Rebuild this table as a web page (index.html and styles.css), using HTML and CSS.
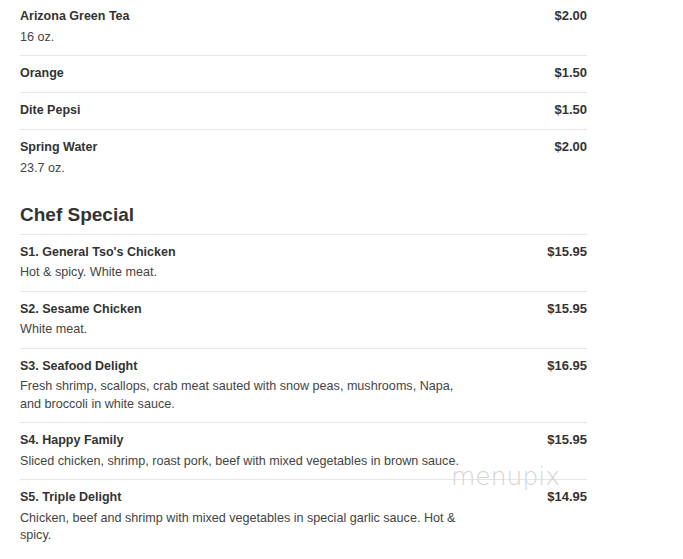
FILE: index.html
```html
<!DOCTYPE html>
<html>
<head>
<meta charset="utf-8">
<link rel="stylesheet" href="styles.css">
</head>
<body>
<div class="menu">
  <div class="section section-top">
    <div class="item first">
      <div class="row"><span class="name">Arizona Green Tea</span><span class="price">$2.00</span></div>
      <div class="desc">16 oz.</div>
    </div>
    <div class="item">
      <div class="row"><span class="name">Orange</span><span class="price">$1.50</span></div>
    </div>
    <div class="item">
      <div class="row"><span class="name">Dite Pepsi</span><span class="price">$1.50</span></div>
    </div>
    <div class="item last">
      <div class="row"><span class="name">Spring Water</span><span class="price">$2.00</span></div>
      <div class="desc">23.7 oz.</div>
    </div>
  </div>
  <div class="section">
    <h2 class="title">Chef Special</h2>
    <div class="item">
      <div class="row"><span class="name">S1. General Tso's Chicken</span><span class="price">$15.95</span></div>
      <div class="desc">Hot &amp; spicy. White meat.</div>
    </div>
    <div class="item">
      <div class="row"><span class="name">S2. Sesame Chicken</span><span class="price">$15.95</span></div>
      <div class="desc">White meat.</div>
    </div>
    <div class="item">
      <div class="row"><span class="name">S3. Seafood Delight</span><span class="price">$16.95</span></div>
      <div class="desc">Fresh shrimp, scallops, crab meat sauted with snow peas, mushrooms, Napa, and broccoli in white sauce.</div>
    </div>
    <div class="item">
      <div class="row"><span class="name">S4. Happy Family</span><span class="price">$15.95</span></div>
      <div class="desc">Sliced chicken, shrimp, roast pork, beef with mixed vegetables in brown sauce.</div>
    </div>
    <div class="item">
      <div class="row"><span class="name">S5. Triple Delight</span><span class="price">$14.95</span></div>
      <div class="desc">Chicken, beef and shrimp with mixed vegetables in special garlic sauce. Hot &amp; spicy.</div>
    </div>
  </div>
</div>
<div class="watermark">menupix</div>
</body>
</html>
```
FILE: styles.css
```css
html, body {
  margin: 0;
  padding: 0;
  background: #fff;
}
body {
  font-family: "Liberation Sans", Arial, sans-serif;
  color: #333;
  position: relative;
  height: 559px;
  overflow: hidden;
}
.menu {
  width: 567px;
  margin-left: 20px;
}
.section-top {
  margin-top: -2px;
}
.item {
  border-top: 1px solid #e6e6e6;
  padding: 8px 0 9px;
}
.item.first {
  border-top-color: transparent;
}
.row {
  display: flex;
  justify-content: space-between;
  align-items: baseline;
}
.name {
  font-size: 12.5px;
  font-weight: bold;
  line-height: 18px;
  color: #333;
}
.price {
  font-size: 13px;
  font-weight: bold;
  line-height: 18px;
  color: #333;
}
.item.nodesc,
.row:only-child {
  padding-bottom: 1px;
}
.desc {
  margin-top: 3.5px;
  font-size: 12.6px;
  line-height: 17.5px;
  color: #444;
  max-width: 442px;
}
.title {
  margin: 17px 0 0;
  font-size: 19px;
  font-weight: bold;
  line-height: 24px;
  color: #333;
  padding-bottom: 6.5px;
}
.watermark {
  position: absolute;
  left: 451px;
  top: 464px;
  font-family: "DejaVu Sans", sans-serif;
  font-weight: 200;
  font-size: 25px;
  line-height: 25px;
  color: #d4d4d4;
}
```
